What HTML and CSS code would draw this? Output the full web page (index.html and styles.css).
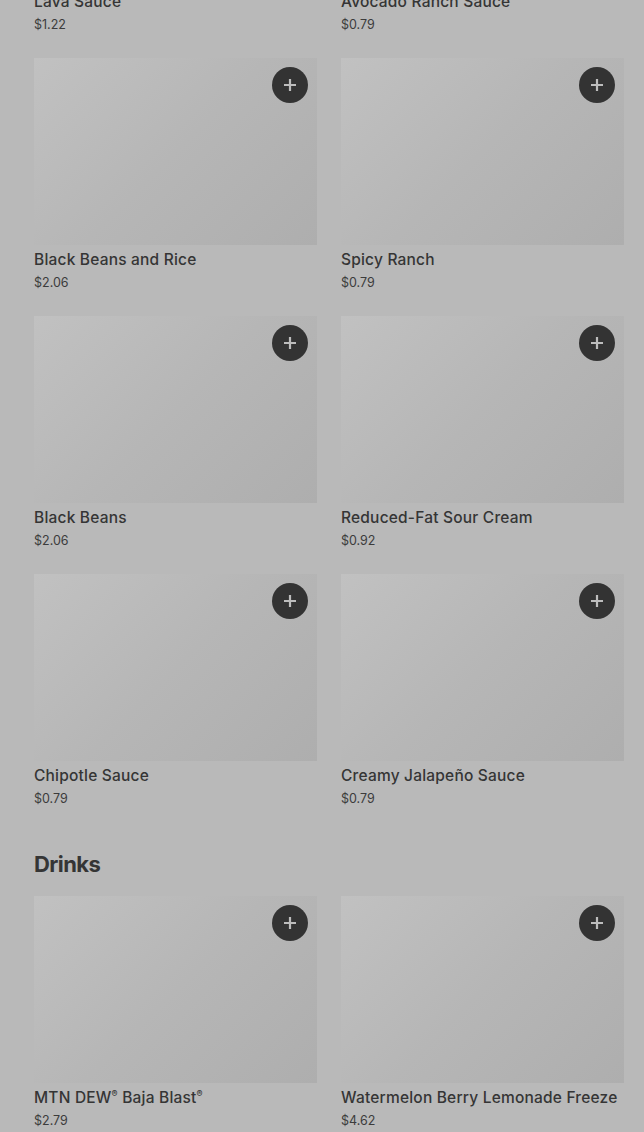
FILE: index.html
```html
<!DOCTYPE html>
<html lang="en">
<head>
    <meta charset="UTF-8">
    <meta name="viewport" content="width=device-width, initial-scale=1.0">
    <title>Menu</title>
    <link rel="stylesheet" href="styles.css">
</head>
<body>
    <div class="page">
        <section class="section">
            <div class="grid">
                <div class="item">
                    <div class="thumb"><button class="add"><svg viewBox="0 0 14 14"><path d="M7 1v12M1 7h12"/></svg></button></div>
                    <p class="name">Lava Sauce</p>
                    <p class="price">$1.22</p>
                </div>
                <div class="item">
                    <div class="thumb"><button class="add"><svg viewBox="0 0 14 14"><path d="M7 1v12M1 7h12"/></svg></button></div>
                    <p class="name">Avocado Ranch Sauce</p>
                    <p class="price">$0.79</p>
                </div>
                <div class="item">
                    <div class="thumb"><button class="add"><svg viewBox="0 0 14 14"><path d="M7 1v12M1 7h12"/></svg></button></div>
                    <p class="name">Black Beans and Rice</p>
                    <p class="price">$2.06</p>
                </div>
                <div class="item">
                    <div class="thumb"><button class="add"><svg viewBox="0 0 14 14"><path d="M7 1v12M1 7h12"/></svg></button></div>
                    <p class="name">Spicy Ranch</p>
                    <p class="price">$0.79</p>
                </div>
                <div class="item">
                    <div class="thumb"><button class="add"><svg viewBox="0 0 14 14"><path d="M7 1v12M1 7h12"/></svg></button></div>
                    <p class="name">Black Beans</p>
                    <p class="price">$2.06</p>
                </div>
                <div class="item">
                    <div class="thumb"><button class="add"><svg viewBox="0 0 14 14"><path d="M7 1v12M1 7h12"/></svg></button></div>
                    <p class="name">Reduced-Fat Sour Cream</p>
                    <p class="price">$0.92</p>
                </div>
                <div class="item">
                    <div class="thumb"><button class="add"><svg viewBox="0 0 14 14"><path d="M7 1v12M1 7h12"/></svg></button></div>
                    <p class="name">Chipotle Sauce</p>
                    <p class="price">$0.79</p>
                </div>
                <div class="item">
                    <div class="thumb"><button class="add"><svg viewBox="0 0 14 14"><path d="M7 1v12M1 7h12"/></svg></button></div>
                    <p class="name">Creamy Jalapeño Sauce</p>
                    <p class="price">$0.79</p>
                </div>
            </div>
        </section>

        <section class="section">
            <h2>Drinks</h2>
            <div class="grid">
                <div class="item">
                    <div class="thumb"><button class="add"><svg viewBox="0 0 14 14"><path d="M7 1v12M1 7h12"/></svg></button></div>
                    <p class="name">MTN DEW<sup>®</sup> Baja Blast<sup>®</sup></p>
                    <p class="price">$2.79</p>
                </div>
                <div class="item">
                    <div class="thumb"><button class="add"><svg viewBox="0 0 14 14"><path d="M7 1v12M1 7h12"/></svg></button></div>
                    <p class="name">Watermelon Berry Lemonade Freeze</p>
                    <p class="price">$4.62</p>
                </div>
            </div>
        </section>
    </div>
</body>
</html>
```

FILE: styles.css
```css
body {
    margin: 0;
    background-color: #b9b9b9;
    font-family: Inter, 'Noto Sans', sans-serif;
    color: #353535;
    overflow: hidden;
}

.page {
    margin-top: -200px;
    padding: 0 20px 0 34px;
}

.section {
    margin-bottom: 39px;
}

h2 {
    margin: 0 0 16px;
    font-size: 22px;
    line-height: 32px;
    font-weight: 700;
    letter-spacing: -0.6px;
    color: #353535;
}

.grid {
    display: grid;
    grid-template-columns: 283px 283px;
    column-gap: 24px;
    row-gap: 23px;
}

.thumb {
    position: relative;
    height: 187px;
    background: linear-gradient(135deg, #c1c1c1 0%, #b6b6b6 50%, #aeaeae 100%);
}

.add {
    position: absolute;
    top: 9px;
    right: 9px;
    width: 36px;
    height: 36px;
    border: none;
    border-radius: 50%;
    background-color: #333;
    padding: 0;
    display: flex;
    align-items: center;
    justify-content: center;
}

.add svg {
    width: 14px;
    height: 14px;
    stroke: #bdbdbd;
    stroke-width: 2.2;
    fill: none;
}

.name {
    margin: 5px 0 0;
    font-size: 15.5px;
    line-height: 20px;
    font-weight: 500;
    letter-spacing: 0.2px;
}

.name sup {
    font-size: 9px;
    vertical-align: 6px;
    line-height: 0;
}

.price {
    margin: 3px 0 0;
    font-size: 12.5px;
    line-height: 20px;
    color: #3c3c3c;
}
```
